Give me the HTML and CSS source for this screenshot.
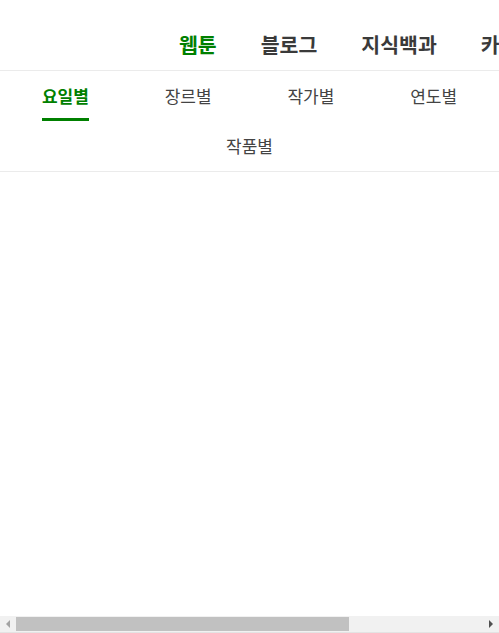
FILE: index.html
```html
<!DOCTYPE html>
<html lang="ko">
<head>
    <meta charset="UTF-8">
    <meta name="viewport" content="width=device-width, initial-scale=1.0">
    <title>웹툰</title>
    <link rel="stylesheet" href="styles.css">
</head>
<body>
    <!-- 상단 서비스 메뉴 -->
    <header class="service-nav">
        <ul class="service-list">
            <li class="service-item active">웹툰</li>
            <li class="service-item">블로그</li>
            <li class="service-item">지식백과</li>
            <li class="service-item">카페</li>
            <li class="service-item">쇼핑</li>
        </ul>
    </header>

    <!-- 분류 탭 -->
    <nav class="sort-tabs">
        <a class="sort-tab active"><span>요일별</span></a>
        <a class="sort-tab"><span>장르별</span></a>
        <a class="sort-tab"><span>작가별</span></a>
        <a class="sort-tab"><span>연도별</span></a>
        <a class="sort-tab"><span>작품별</span></a>
    </nav>

    <!-- 가로 스크롤바 -->
    <div class="hscroll">
        <span class="arrow left"></span>
        <div class="track"><div class="thumb"></div></div>
        <span class="arrow right"></span>
    </div>
</body>
</html>
```

FILE: styles.css
```css
* {
    margin: 0;
    padding: 0;
    box-sizing: border-box;
}

body {
    font-family: 'Noto Sans CJK KR', 'Noto Sans', sans-serif;
    background: white;
    color: #444;
    overflow: hidden;
}

.service-nav {
    height: 71px;
    border-bottom: 1px solid #ebebeb;
    overflow: hidden;
}

.service-list {
    list-style: none;
    display: flex;
    height: 70px;
    padding-left: 179px;
    padding-top: 32px;
    gap: 44px;
    white-space: nowrap;
}

.service-item {
    font-size: 20.5px;
    font-weight: bold;
    color: #3a3a3a;
    line-height: 24px;
}

.service-item.active {
    color: #008000;
}

.sort-tabs {
    display: flex;
    flex-wrap: wrap;
    justify-content: center;
    padding: 0 4px;
    border-bottom: 1px solid #ebebeb;
}

.sort-tab {
    width: 25%;
    height: 50px;
    text-align: center;
    font-size: 17px;
    color: #444;
    text-decoration: none;
}

.sort-tab span {
    display: inline-block;
    height: 50px;
    padding-top: 13px;
    line-height: 24px;
    border-bottom: 3px solid transparent;
}

.sort-tab.active span {
    color: #008000;
    font-weight: bold;
    border-bottom-color: #008000;
}

.hscroll {
    position: fixed;
    left: 0;
    right: 0;
    bottom: 0;
    height: 17px;
    display: flex;
    align-items: center;
    background: #f1f1f1;
    border-bottom: 1px solid #e3e3e3;
}

.track {
    flex: 1;
    height: 100%;
    display: flex;
    align-items: center;
}

.thumb {
    width: 333px;
    height: 14px;
    background: #c1c1c1;
}

.arrow {
    width: 16px;
    height: 100%;
    display: flex;
    align-items: center;
    justify-content: center;
}

.arrow::before {
    content: "";
    border-top: 4px solid transparent;
    border-bottom: 4px solid transparent;
}

.arrow.left::before {
    border-right: 4px solid #a3a3a3;
}

.arrow.right::before {
    border-left: 4px solid #505050;
}
```
